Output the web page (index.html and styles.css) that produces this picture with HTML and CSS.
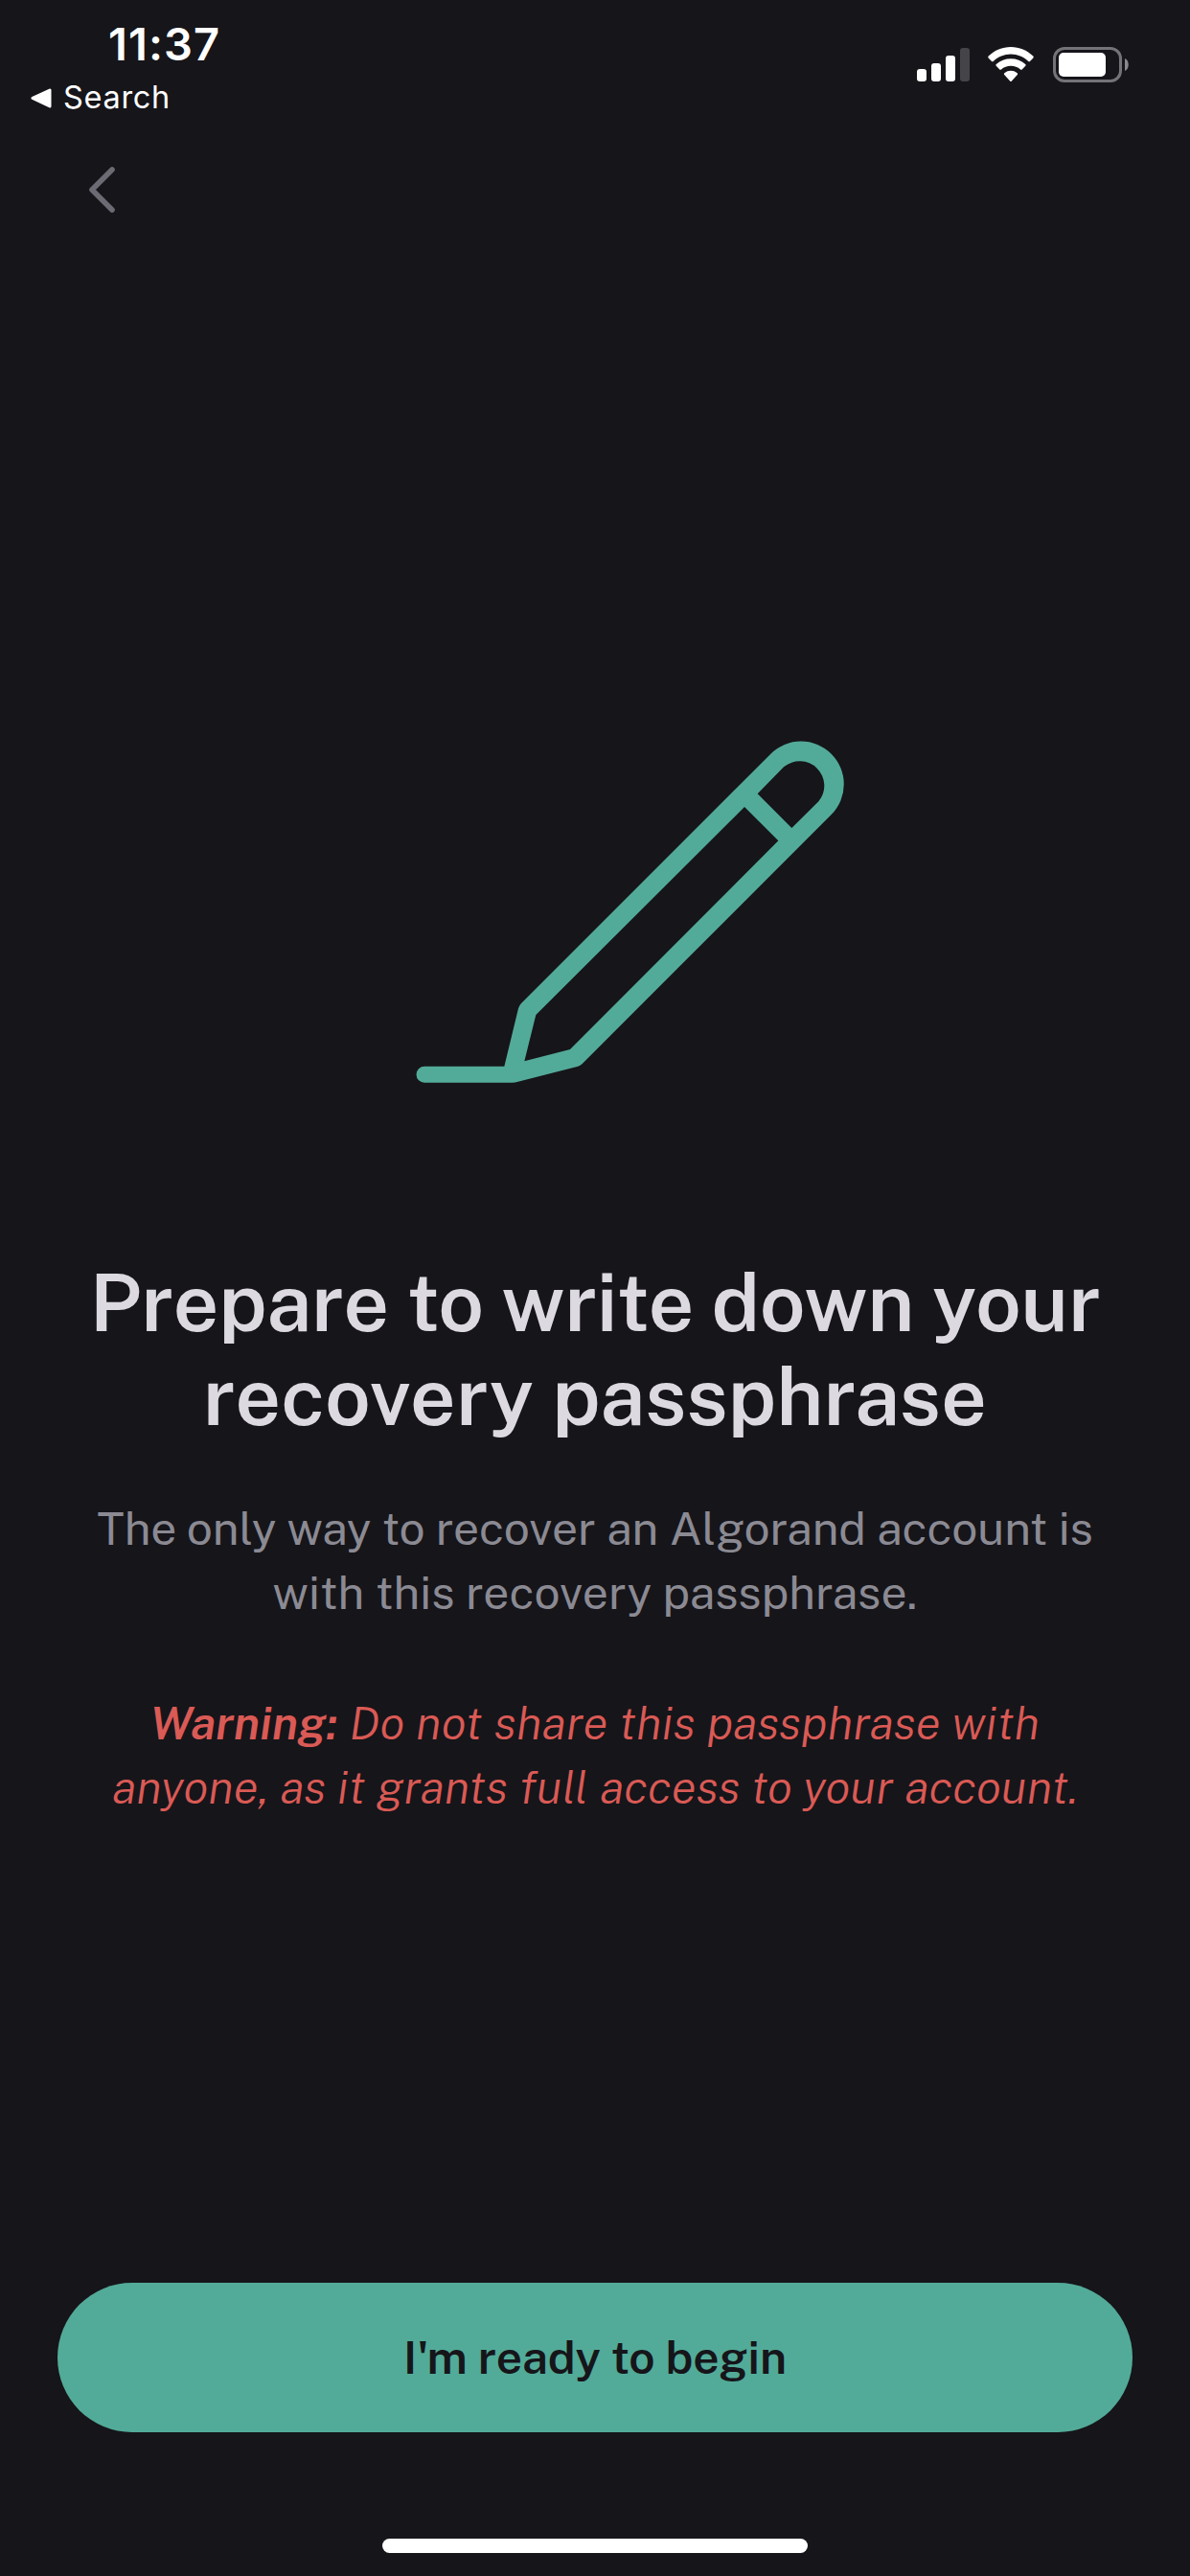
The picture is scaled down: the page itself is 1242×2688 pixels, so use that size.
FILE: index.html
```html
<!DOCTYPE html>
<html lang="en">
<head>
<meta charset="utf-8">
<title>Recovery passphrase</title>
<link rel="stylesheet" href="styles.css">
</head>
<body>
<div class="screen">
  <header class="status">
    <div class="status-left">
      <div class="time">11:37</div>
      <div class="return-app">
        <svg class="return-arrow" width="22" height="21" viewBox="0 0 22 21"><path d="M2 10.3 20 2v17Z" fill="#fff" stroke="#fff" stroke-width="3" stroke-linejoin="round"/></svg>
        <span>Search</span>
      </div>
    </div>
    <div class="status-icons">
      <svg width="55" height="37" viewBox="0 0 55 37" fill="#fff"><rect x="0" y="23" width="10" height="13" rx="3"/><rect x="15" y="17" width="10" height="19" rx="3"/><rect x="30" y="9" width="10" height="27" rx="3"/><rect x="45" y="1" width="10" height="35" rx="3" fill="#454449"/></svg>
      <svg class="wifi" width="48" height="37" viewBox="0 0 48 37" fill="#fff"><path d="M.7 9.6C7 3.4 15 0 24 0s17 3.400 23.300 9.600c.6.600.6 1.200.1 1.800l-3.400 3.500c-.5.500-1.200.5-1.700 0C37.400 10.300 31 7.500 24 7.500S10.600 10.300 5.700 14.900c-.5.500-1.200.5-1.700 0L.6 11.400c-.5-.6-.5-1.200.1-1.800Z"/><path d="M8.800 18C13 14.200 18.200 12.300 24 12.300S35 14.200 39.200 18c.6.600.6 1.200.1 1.800l-3.600 3.600c-.5.500-1.100.5-1.700 0-2.800-2.400-6.200-3.700-10-3.700s-7.200 1.300-10 3.700c-.6.500-1.200.5-1.700 0l-3.600-3.600c-.5-.6-.5-1.200.1-1.800Z"/><path d="M17.300 27.300c4-3.300 9.400-3.300 13.400 0 .6.500.6 1.100.1 1.700l-5.900 6.400c-.6.700-1.200.7-1.800 0L17.200 29c-.5-.6-.5-1.200.1-1.700Z"/></svg>
      <svg class="battery" width="80" height="37" viewBox="0 0 80 37"><rect x="1.500" y="1.500" width="69" height="34" rx="10.500" fill="none" stroke="#747377" stroke-width="3"/><rect x="6" y="6" width="49" height="25" rx="5" fill="#fff"/><path d="M75 12c5 2 5 11 0 13Z" fill="#8a898d"/></svg>
    </div>
  </header>
  <nav class="nav">
    <svg width="30" height="50" viewBox="0 0 30 50"><path d="M25 4 4 25 25 46" fill="none" stroke="#6c6b74" stroke-width="5.600" stroke-linecap="round" stroke-linejoin="round"/></svg>
  </nav>
  <main class="content">
    <svg class="pencil" width="448" height="358" viewBox="40 70 1344 1074"><path fill="#52ab98" fill-rule="evenodd" d="M67 1089H317L361 908Q363 899 370 892L1151 111A134 134 0 0 1 1341 301L562 1080Q556 1086 548 1089L360 1137Q350 1140 342 1140H67A25.500 25.500 0 0 1 67 1089ZM1110 236 1217 343 1301 260A77 77 0 0 0 1192 152ZM1069 277 416 928 380 1073 523 1036 1175 383Z"/></svg>
    <h1 class="title"><span class="title-first">Prepare to write down your</span> <span>recovery passphrase</span></h1>
    <p class="text"><span class="text-first">The only way to recover an Algorand account is</span> <span>with this recovery passphrase.</span></p>
    <p class="text warning"><span class="warning-first"><strong>Warning:</strong> Do not share this passphrase with</span> <span class="warning-second">anyone, as it grants full access to your account.</span></p>
  </main>
  <footer class="footer">
    <button class="begin" type="button">I'm ready to begin</button>
    <div class="home-bar"></div>
  </footer>
</div>
</body>
</html>
```
FILE: styles.css
```css
* { box-sizing: border-box; }
body { margin: 0; background: #16151a; }
.screen {
  display: flex;
  flex-direction: column;
  width: 1242px;
  height: 2688px;
  background: #16151a;
  font-family: "Public Sans", Inter, "Liberation Sans", sans-serif;
}
svg { display: block; flex: none; }

.status {
  display: flex;
  justify-content: space-between;
  height: 172px;
  padding: 18px 63px 0 32px;
  color: #fff;
  font-family: Inter, "Liberation Sans", sans-serif;
}
.time {
  padding-left: 81px;
  font-size: 47px;
  font-weight: 600;
  line-height: 56px;
  letter-spacing: 1.1px;
}
.return-app {
  display: flex;
  align-items: center;
  gap: 12px;
  margin-top: 8px;
  font-size: 32.5px;
  line-height: 40px;
  letter-spacing: .67px;
}
.status-icons { display: flex; padding-top: 31px; }
.wifi { margin-left: 19px; }
.battery { margin-left: 20px; }

.nav { height: 50px; padding: 1px 0 0 92px; }

.content {
  display: flex;
  flex-direction: column;
  flex: 1;
  align-items: center;
  padding-top: 551px;
  text-align: center;
}
.pencil { margin-left: 73px; }
.title {
  margin: 179px 0 0;
  color: #dcdae0;
  font-size: 84px;
  font-weight: 600;
  line-height: 98px;
}
.title span, .text span { display: block; white-space: nowrap; }
.title-first { letter-spacing: -.27px; }
.text {
  margin: 55px 0 0;
  color: #8b8a93;
  font-size: 48px;
  line-height: 67px;
}
.text-first { letter-spacing: -.14px; }
.warning {
  margin-top: 69px;
  color: #da5a55;
  font-style: italic;
  font-weight: 300;
}
.warning-first { letter-spacing: .2px; }
.warning-second { letter-spacing: .05px; }
.warning strong { font-weight: 600; letter-spacing: 0; }

.footer {
  display: flex;
  flex-direction: column;
  align-items: center;
  height: 306px;
}
.begin {
  width: 1122px;
  height: 156px;
  padding: 0;
  border: 0;
  border-radius: 78px;
  background: #52ab98;
  color: #16151a;
  font: 600 48px/156px "Public Sans", Inter, "Liberation Sans", sans-serif;
  letter-spacing: -.1px;
}
.home-bar {
  width: 444px;
  height: 15px;
  margin-top: 111px;
  border-radius: 8px;
  background: #fff;
}
```
